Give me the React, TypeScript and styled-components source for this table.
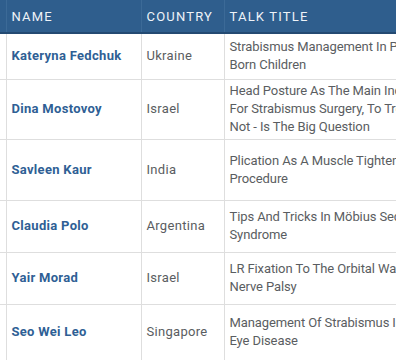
import { FunctionComponent } from "react";
import styled, { createGlobalStyle } from "styled-components";

const GlobalStyle = createGlobalStyle`
  html, body {
    margin: 0;
    padding: 0;
    background: #ffffff;
  }
  body {
    font-family: Roboto, "Liberation Sans", sans-serif;
  }
`;

const Viewport = styled.div`
  width: 396px;
  height: 360px;
  overflow: hidden;
`;

const Table = styled.table`
  border-collapse: collapse;
  table-layout: fixed;
  width: 620px;
`;

const HeadCell = styled.th<{ $width: number }>`
  width: ${(p) => p.$width}px;
  height: 33px;
  padding: 0 5px;
  box-sizing: border-box;
  background: #2f5e8d;
  border-bottom: 2px solid #244a72;
  border-left: 1px solid #3c6a97;
  color: #eef3f8;
  font-size: 13px;
  font-weight: 400;
  letter-spacing: 1.2px;
  text-align: left;
  text-transform: uppercase;
  white-space: nowrap;
  &:first-child {
    padding: 0;
    border-left: none;
  }
`;

const Row = styled.tr<{ $height: number }>`
  height: ${(p) => p.$height}px;
  border-bottom: 1px solid #dedede;
`;

const Cell = styled.td`
  padding: 0 5px;
  border-left: 1px solid #dedede;
  color: #5a5d61;
  font-size: 13px;
  line-height: 18px;
  letter-spacing: 0.3px;
  vertical-align: middle;
  white-space: nowrap;
  &:first-child {
    padding: 0;
    border-left: none;
  }
`;

const NameCell = styled(Cell)`
  color: #2f5f95;
  font-weight: 700;
`;

const TitleCell = styled(Cell)`
  letter-spacing: -0.1px;
`;

const Line = styled.span`
  display: block;
`;

type Speaker = {
  name: string;
  country: string;
  title: string[];
  height: number;
};

const speakers: Speaker[] = [
  { name: "Kateryna Fedchuk", country: "Ukraine", title: ["Strabismus Management In Premature", "Born Children"], height: 46 },
  {
    name: "Dina Mostovoy",
    country: "Israel",
    title: ["Head Posture As The Main Indication", "For Strabismus Surgery, To Treat Or", "Not - Is The Big Question"],
    height: 60,
  },
  { name: "Savleen Kaur", country: "India", title: ["Plication As A Muscle Tightening", "Procedure"], height: 61 },
  { name: "Claudia Polo", country: "Argentina", title: ["Tips And Tricks In Möbius Sequence", "Syndrome"], height: 52 },
  { name: "Yair Morad", country: "Israel", title: ["LR Fixation To The Orbital Wall For Sixth", "Nerve Palsy"], height: 52 },
  { name: "Seo Wei Leo", country: "Singapore", title: ["Management Of Strabismus In Thyroid", "Eye Disease"], height: 56 },
];

const App: FunctionComponent = () => {
  return (
    <>
      <GlobalStyle />
      <Viewport>
        <Table>
          <thead>
            <tr>
              <HeadCell $width={6} />
              <HeadCell $width={135}>Name</HeadCell>
              <HeadCell $width={83}>Country</HeadCell>
              <HeadCell $width={396}>Talk Title</HeadCell>
            </tr>
          </thead>
          <tbody>
            {speakers.map((s) => (
              <Row key={s.name} $height={s.height}>
                <Cell />
                <NameCell>{s.name}</NameCell>
                <Cell>{s.country}</Cell>
                <TitleCell>
                  {s.title.map((line) => (
                    <Line key={line}>{line}</Line>
                  ))}
                </TitleCell>
              </Row>
            ))}
          </tbody>
        </Table>
      </Viewport>
    </>
  );
};

export default App;
